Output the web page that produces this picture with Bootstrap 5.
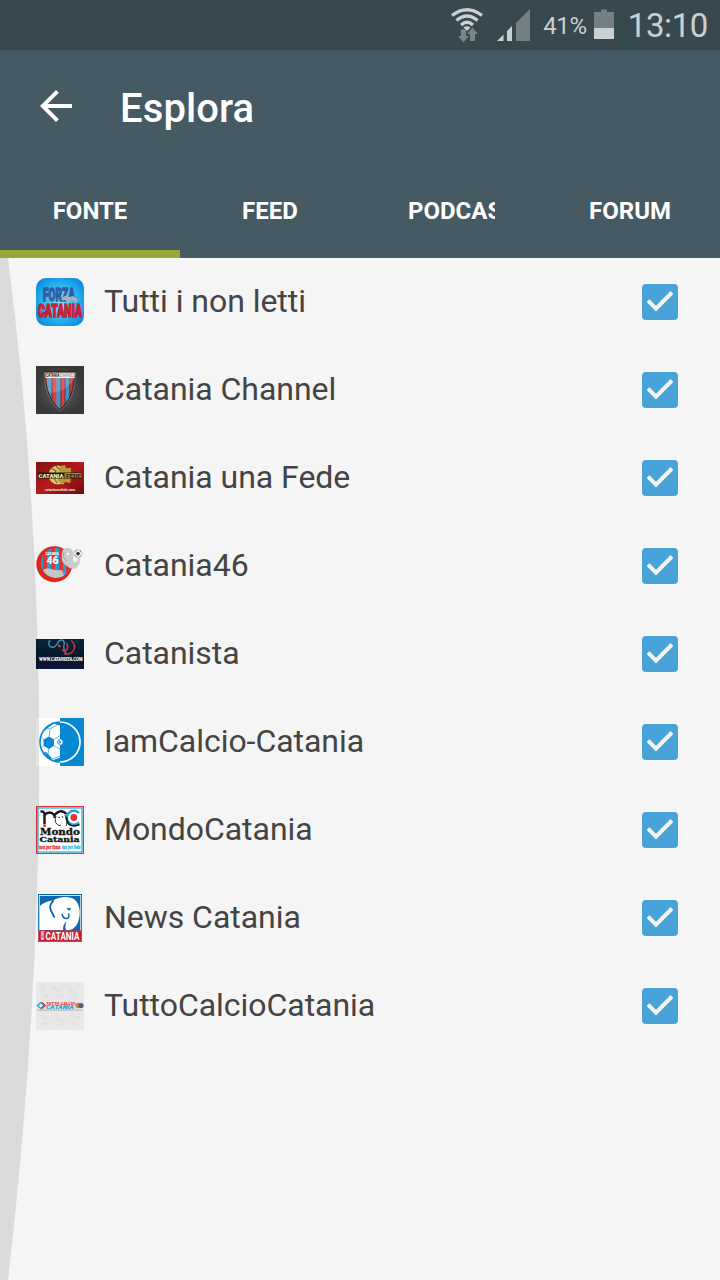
<!DOCTYPE html>
<html lang="it">
<head>
  <meta charset="utf-8">
  <meta name="viewport" content="width=device-width, initial-scale=1">
  <title>Esplora</title>
  <link href="https://cdn.jsdelivr.net/npm/bootstrap@5.3.0/dist/css/bootstrap.min.css" rel="stylesheet">
  <style>
    body {
      font-family: Roboto, "Noto Sans", sans-serif;
      background: #f5f5f5;
      color: #444;
      height: 1280px;
      overflow: hidden;
    }
    svg { display: block; flex-shrink: 0; }
    .status-bar { height: 50px; background: #38484f; color: #cbd0d2; }
    .battery-text { font-size: 24px; line-height: 50px; margin: 1px 7px 0 12px; letter-spacing: -.3px; }
    .clock { font-size: 33px; line-height: 50px; margin: 2px 12px 0 14px; letter-spacing: -.4px; }
    .app-header { background: #465a64; }
    .app-header .navbar { height: 112px; padding: 0 0 0 32px; }
    .app-title { font-size: 40px; font-weight: 500; line-height: 48px; letter-spacing: .1px; margin: 5px 0 0 40px; }
    .source-tabs { height: 96px; }
    .source-tabs .nav-link {
      height: 96px;
      padding: 8px 0 0;
      border-radius: 0;
      border-bottom: 8px solid transparent;
      color: #fff;
      font-size: 24px;
      font-weight: 700;
    }
    .source-tabs .nav-link.active { border-color: #97a936; }
    .tab-text { overflow: hidden; white-space: nowrap; line-height: 32px; margin-top: 1px; }
    .tab-cut { width: 87px; margin-left: 3px; }
    .source-list .list-group-item {
      height: 88px;
      padding: 0 36px;
      border: 0;
      background: transparent;
      color: #444;
      font-size: 32px;
    }
    .source-name { margin: -2px 0 0 20px; line-height: 48px; letter-spacing: -.04px; }
    .edge-glow { top: 258px; left: 0; pointer-events: none; z-index: 2; }
  </style>
</head>
<body>
  <div class="status-bar d-flex align-items-center justify-content-end">
    <!-- wifi -->
    <svg width="36" height="50" viewBox="0 0 36 50">
      <g fill="none" stroke="#cbd0d2" stroke-width="3.2">
        <path d="M3 15.500Q18 4 33 15.500"/>
        <path d="M7.500 20.500Q18 11.500 28.500 20.500"/>
        <path d="M12 25Q18 19.500 24 25"/>
      </g>
      <path d="M14.500 27.500Q18 24.800 21.500 27.500L18 31z" fill="#cbd0d2"/>
      <path d="M12 29.500h5V36h3l-5.500 6.500L9 36h3zM21 41v-7h-3l5.500-6.500L29 34h-3v7z" fill="#7b868a"/>
    </svg>
    <!-- signal -->
    <svg width="46" height="50" viewBox="0 0 46 50">
      <path d="M12 41h6.500v-6.500zM22 41h5V26l-5 5z" fill="#cbd0d2"/>
      <path d="M31 41h14V9L31 23z" fill="#758085"/>
    </svg>
    <span class="battery-text">41%</span>
    <svg width="20" height="50" viewBox="0 0 20 50">
      <path d="M0 12h7V9.500h6V12h7v17H0z" fill="#758085"/>
      <path d="M0 28h20v11H0z" fill="#cbd0d2"/>
    </svg>
    <span class="clock">13:10</span>
  </div>

  <header class="app-header">
    <nav class="navbar d-flex flex-nowrap justify-content-start text-white">
      <a href="#" aria-label="Indietro">
        <svg width="48" height="48" viewBox="0 0 24 24"><path d="M20 11H7.830l5.590-5.590L12 4l-8 8 8 8 1.410-1.410L7.830 13H20z" fill="#fff"/></svg>
      </a>
      <h1 class="app-title mb-0">Esplora</h1>
    </nav>
    <ul class="source-tabs nav nav-fill flex-nowrap">
      <li class="nav-item col-3"><a class="nav-link active d-flex align-items-center justify-content-center" href="#"><span class="tab-text">FONTE</span></a></li>
      <li class="nav-item col-3"><a class="nav-link d-flex align-items-center justify-content-center" href="#"><span class="tab-text">FEED</span></a></li>
      <li class="nav-item col-3"><a class="nav-link d-flex align-items-center justify-content-center" href="#"><span class="tab-text tab-cut text-start">PODCAST</span></a></li>
      <li class="nav-item col-3"><a class="nav-link d-flex align-items-center justify-content-center" href="#"><span class="tab-text">FORUM</span></a></li>
    </ul>
  </header>

  <main>
    <ul class="source-list list-group list-group-flush">
      <li class="list-group-item d-flex align-items-center">
        <svg width="48" height="48" viewBox="0 0 48 48">
          <defs>
            <radialGradient id="skyGlow" r=".65"><stop offset="0" stop-color="#7be4fa"/><stop offset=".55" stop-color="#2bb5ef"/><stop offset="1" stop-color="#0583dc"/></radialGradient>
            <linearGradient id="forzaFill" x2="0" y2="1"><stop offset="0" stop-color="#1d6fd0"/><stop offset=".5" stop-color="#345bb4"/><stop offset="1" stop-color="#9b4b91"/></linearGradient>
          </defs>
          <rect width="48" height="48" rx="10" fill="url(#skyGlow)"/>
          <g font-family="Roboto, sans-serif" font-weight="900">
            <text x="7" y="23" font-size="18" textLength="32" lengthAdjust="spacingAndGlyphs" fill="url(#forzaFill)" stroke="#315a9d" stroke-width="1.300">FORZA</text>
            <text x="2" y="38.500" font-size="18" textLength="44" lengthAdjust="spacingAndGlyphs" fill="#df2039" stroke="#c4213c" stroke-width="1.600">CATANIA</text>
          </g>
          <path d="M26 20q4-4 7-1l4-1 4 3v3h-3l-2-2-2 2h-3l-2-2-3 1z" fill="#a9b1c0"/>
        </svg>
        <span class="source-name">Tutti i non letti</span>
      </li>
      <li class="list-group-item d-flex align-items-center">
        <svg width="48" height="48" viewBox="0 0 48 48">
          <defs>
            <radialGradient id="darkPlate"><stop offset="0" stop-color="#656565"/><stop offset="1" stop-color="#383838"/></radialGradient>
            <clipPath id="shieldClip"><path d="M9 6h30q0 26-15 38Q9 32 9 6z"/></clipPath>
          </defs>
          <rect width="48" height="48" fill="url(#darkPlate)"/>
          <g clip-path="url(#shieldClip)">
            <rect width="48" height="48" fill="#e43c32"/>
            <path d="M13.500 10v35M22.500 10v35M31 10v35" stroke="#4b8fc4" stroke-width="4.500"/>
            <path d="M37.500 10v35" stroke="#b1342f" stroke-width="3"/>
            <path d="M16 10v35M25 10v35M29 10v35M34 10v35" stroke="#30303a" stroke-width=".8"/>
            <path d="M9 11h30Q31 27 12 27z" fill="#fff" opacity=".18"/>
          </g>
          <path d="M9 6h30q0 26-15 38Q9 32 9 6z" fill="none" stroke="#252525" stroke-width="1.500"/>
          <path d="M8.300 6.500h31.200q0 26.500-15.500 38.500Q8.300 32.500 8.300 6.500z" fill="none" stroke="#9a9a9a" stroke-width=".6"/>
          <rect x="9.500" y="7" width="29" height="5" fill="#f2f2ee"/>
          <text x="10" y="11.200" font-family="Roboto, sans-serif" font-size="4.500" textLength="28" lengthAdjust="spacingAndGlyphs" fill="#222"><tspan font-weight="700">CATANIA</tspan><tspan fill="#777">CHANNEL</tspan></text>
        </svg>
        <span class="source-name">Catania Channel</span>
      </li>
      <li class="list-group-item d-flex align-items-center">
        <svg width="48" height="48" viewBox="0 0 48 48">
          <defs><linearGradient id="redBand" x2="1" y2="1"><stop offset="0" stop-color="#801010"/><stop offset=".5" stop-color="#b51a1b"/><stop offset="1" stop-color="#6e0d10"/></linearGradient></defs>
          <rect y="8" width="48" height="32" fill="url(#redBand)"/>
          <circle cx="22" cy="21" r="9.500" fill="#dcc56c"/>
          <path d="M15 14l5 3-3 5 4 7M20 12l5 5" stroke="#7e6524" stroke-width="1.200" fill="none"/>
          <path d="M24 12l5-1 1 3h5v5l1 3-1 3-1 4-5-1-2 3-5-4z" fill="#b89537"/>
          <rect x="2" y="18.500" width="44" height="6" fill="#211808"/>
          <rect x="28.500" y="19" width="17" height="5" fill="#a08638"/>
          <g font-family="Roboto, sans-serif" font-weight="900">
            <text x="2.500" y="23.800" font-size="5.800" textLength="25" lengthAdjust="spacingAndGlyphs" fill="#fff3ba">CATANIA</text>
            <text x="30" y="23.800" font-size="5.800" textLength="15" lengthAdjust="spacingAndGlyphs" fill="#3a2c0c">FEDE</text>
            <text x="9" y="36.500" font-size="4" textLength="30" lengthAdjust="spacingAndGlyphs" fill="#ffd0cb">cataniaunafede.com</text>
          </g>
        </svg>
        <span class="source-name">Catania una Fede</span>
      </li>
      <li class="list-group-item d-flex align-items-center">
        <svg width="48" height="48" viewBox="0 0 48 48">
          <defs><clipPath id="discClip"><circle cx="20" cy="21" r="15"/></clipPath></defs>
          <circle cx="18.300" cy="22.200" r="18" fill="#df261f"/>
          <g clip-path="url(#discClip)">
            <rect width="48" height="48" fill="#299ed5"/>
            <path d="M9 5v34M17 5v34M25 5v34M32 5v34" stroke="#e53334" stroke-width="4"/>
            <path d="M7 28q4-3 8-1 6 2 11 1l3 9H8z" fill="#c3c5c7"/>
          </g>
          <path d="M26.500 9q2-4 6-3 5 1 5 7-1 6 1 7.500 3 0 3.500-4.500l2 .5q0 7-4 9.500-5 2-9-2-4-2-5-6-1-5 .5-9z" fill="#c8cacc"/>
          <path d="M28 10q-2 7 3 9" stroke="#a6a9ab" fill="none"/>
          <circle cx="32" cy="12" r="1.200" fill="#fff"/>
          <circle cx="42" cy="11.700" r="4" fill="#eee" stroke="#aaa" stroke-width=".6"/>
          <path d="M41 10.500h2l.7 1.500-1.700 1.200-1.700-1.200zM39.300 9l1-.8M44 8.500l1 .8M44.500 14l-.8.800M39.300 13.500l.8 1" fill="#333" stroke="#333" stroke-width=".8"/>
          <g font-family="Roboto, sans-serif" font-weight="900" fill="#fff">
            <text x="9.500" y="12.500" font-size="3.500" textLength="13" lengthAdjust="spacingAndGlyphs">CATANIA</text>
            <text x="10.500" y="22" font-size="11.500" textLength="12" lengthAdjust="spacingAndGlyphs">46</text>
          </g>
        </svg>
        <span class="source-name">Catania46</span>
      </li>
      <li class="list-group-item d-flex align-items-center">
        <svg width="48" height="48" viewBox="0 0 48 48">
          <defs><linearGradient id="nightFill" x2="0" y2="1"><stop offset="0" stop-color="#08253b"/><stop offset=".7" stop-color="#041427"/><stop offset="1" stop-color="#101843"/></linearGradient></defs>
          <rect y="9" width="48" height="30" fill="url(#nightFill)"/>
          <path d="M14 10q-3 5 1 7 4 1 6-3 2-4 5-4 3 1 2 5-1 5 2 8" fill="none" stroke="#4287b1" stroke-width="1.500"/>
          <path d="M30 13q3 3 1 6-2 3-5 1M35 10.500q5 4 3 9-3 6-10 4" fill="none" stroke="#c8373d" stroke-width="1.600"/>
          <path d="M22 14.500l3 1-1 2-2-1z" fill="#e14646"/>
          <text x="3" y="30.500" font-family="Liberation Serif, serif" font-weight="700" font-size="5.200" textLength="43.500" lengthAdjust="spacingAndGlyphs" fill="#fff" stroke="#fff" stroke-width=".2">WWW.CATANISTA.COM</text>
        </svg>
        <span class="source-name">Catanista</span>
      </li>
      <li class="list-group-item d-flex align-items-center">
        <svg width="48" height="48" viewBox="0 0 48 48">
          <defs><clipPath id="ballClip"><path d="M24 4a20 20 0 0 0 0 40z"/></clipPath></defs>
          <path d="M0 0h24v48H0z" fill="#fff"/>
          <path d="M24 0h24v48H24z" fill="#0788d2"/>
          <g clip-path="url(#ballClip)">
            <path d="M7.500 21.500l5.500-3 5 3v6l-5 3.500-5.500-3zM8 13l3-8 9-1-7 5zM16 3h8v4.500l-4-1zM5 33l6 1.500 5 6-3 2zM17 42l7-2.500V45zM2 17h3l-1 6-2 2z" fill="#0788d2"/>
            <path d="M13 18.500l1-7M18 21.500l6-4M18 27.500l6 4M13 31l-1 5M7.500 28L4 31M7.500 21.500L5 18M14 11l7-4M12 36l-5-2M16 41l8-3M14 11l-4-1" fill="none" stroke="#5baedf" stroke-width=".9"/>
          </g>
          <path d="M24 4a20 20 0 0 0 0 40" fill="none" stroke="#0788d2" stroke-width="1.600"/>
          <path d="M24 4a20 20 0 0 1 0 40" fill="none" stroke="#fff" stroke-width="1.700"/>
          <path d="M24 21.700a2.300 2.300 0 0 0 0 4.600" fill="#fff" stroke="#0788d2"/>
          <path d="M24 21.300a2.700 2.700 0 0 1 0 5.400z" fill="#fff"/>
          <circle cx="24" cy="24" r="1" fill="#0788d2"/>
        </svg>
        <span class="source-name">IamCalcio-Catania</span>
      </li>
      <li class="list-group-item d-flex align-items-center">
        <svg width="48" height="48" viewBox="0 0 48 48">
          <rect x=".6" y=".6" width="46.800" height="46.800" fill="#fff" stroke="#e43439" stroke-width="1.200"/>
          <rect x="2" y="2" width="44" height="44" fill="none" stroke="#37b7df" stroke-width="1.300"/>
          <path d="M4.500 5.500q4-.5 4 3V18M8.500 9q5-5 10 0 6-7 12-1" fill="none" stroke="#171717" stroke-width="2.400"/>
          <path d="M18.500 8v4" stroke="#171717" stroke-width="2.200"/>
          <path d="M20 10q-2 6 1 8 2 3 4 1M29 9q3 8 1 11" fill="none" stroke="#333" stroke-width="1"/>
          <circle cx="23" cy="11.500" r=".8" fill="#222"/>
          <circle cx="26.500" cy="11" r=".8" fill="#222"/>
          <path d="M43 7a7 7 0 1 0 0 9.500" fill="none" stroke="#25a7d7" stroke-width="2.500"/>
          <path d="M30.500 11q0 7 5 8.500 4 1 8-1" fill="none" stroke="#171717" stroke-width="1.800"/>
          <circle cx="37.800" cy="11.500" r="3.400" fill="#e43439"/>
          <circle cx="8.500" cy="19.500" r="1.500" fill="#e43439"/>
          <g font-family="DejaVu Serif, serif" font-weight="700" fill="#111" stroke="#111" stroke-width=".3">
            <text x="4" y="28.500" font-size="9" textLength="40" lengthAdjust="spacingAndGlyphs">Mondo</text>
            <text x="3.500" y="35.500" font-size="8" textLength="40" lengthAdjust="spacingAndGlyphs">Catania</text>
          </g>
          <g font-family="Liberation Serif, serif" font-weight="700" font-size="7" stroke-width=".3">
            <text x="3" y="43" textLength="21.500" lengthAdjust="spacingAndGlyphs" fill="#e43439" stroke="#e43439">non per fama</text>
            <text x="26" y="43" textLength="18.500" lengthAdjust="spacingAndGlyphs" fill="#37b7df" stroke="#37b7df">ma per fede</text>
          </g>
        </svg>
        <span class="source-name">MondoCatania</span>
      </li>
      <li class="list-group-item d-flex align-items-center">
        <svg width="48" height="48" viewBox="0 0 48 48">
          <rect x="2" width="44" height="48" fill="#086aac"/>
          <rect x="3.300" y="1.500" width="41.400" height="45" fill="#086aac" stroke="#fff" stroke-width=".8"/>
          <!-- elephant: body, head and curled trunk -->
          <path d="M4 12Q9 7 17 6.500 22 3 30 3q9 0 12 7 3 7 1 15-2 9-9 11H4z" fill="#fff"/>
          <path d="M17.500 6.500q-5 5-2.500 10l3.500 7" fill="none" stroke="#086aac" stroke-width="1.800"/>
          <path d="M26 20q1 5 5 4.500 3-1 1.500-5" fill="none" stroke="#086aac" stroke-width="1.500"/>
          <path d="M31 13.500q2 1.500 4 0l-1 3q-3 0-3-3z" fill="#086aac"/>
          <path d="M27 36q0-6 3.500-9-2 5-.5 9zM44 24q-1 7-6 12h6z" fill="#086aac"/>
          <path d="M2 36.500h44V48H2z" fill="#c61f36"/>
          <path d="M2.500 37h43v10.500h-43z" fill="none" stroke="#b34b61" stroke-width="1"/>
          <g font-family="Roboto, sans-serif" fill="#fff" font-weight="700">
            <text x="9.500" y="46" font-size="11.500" textLength="34" lengthAdjust="spacingAndGlyphs">CATANIA</text>
            <text transform="translate(7.500 46) rotate(-90)" font-size="4" textLength="9" lengthAdjust="spacingAndGlyphs">NEWS</text>
          </g>
        </svg>
        <span class="source-name">News Catania</span>
      </li>
      <li class="list-group-item d-flex align-items-center">
        <svg width="48" height="48" viewBox="0 0 48 48">
          <rect width="48" height="48" fill="#e8e8e8"/>
          <path d="M3 5q3-3 5 0t-3 4M15 8q4-4 6 0t5-3M31 4q4 1 3 4t5 1M43 11q-3 2-5 0M7 14q4-2 5 2M21 15q3-4 6 0M34 16q4-3 6 1M3 34q4-2 5 2t4-2M19 33q4 1 3 4t5 1M33 35q3-4 6 0t5-1M6 43q4-4 6 0M20 44q3-3 6 0M35 43q3-3 6 1" fill="none" stroke="#e0e0e0" stroke-width="1.500"/>
          <path d="M5 20.500L1.500 23.500 5 26.500l3-3z" fill="none" stroke="#2d9fd0" stroke-width="1.500"/>
          <path d="M6 20.500l3.300 3-3.300 3" fill="none" stroke="#dd3944" stroke-width="1.500"/>
          <g font-family="Roboto, sans-serif" font-weight="900" font-style="italic">
            <text x="10" y="22.500" font-size="3.600" textLength="29" lengthAdjust="spacingAndGlyphs" fill="#d9323e">TUTTO CALCIO</text>
            <text x="10" y="26.700" font-size="4.900" textLength="28" lengthAdjust="spacingAndGlyphs" fill="#209bd0">CATANIA</text>
          </g>
          <path d="M1 28h28" stroke="#888" stroke-width=".8" stroke-dasharray="2 .6"/>
          <path d="M29 28h8" stroke="#e3767c" stroke-width=".8"/>
          <path d="M37 28h10" stroke="#80bcd6" stroke-width=".8"/>
          <circle cx="42" cy="23.500" r="2.800" fill="#c58b43"/>
          <circle cx="45" cy="23.500" r="2.600" fill="#685579"/>
        </svg>
        <span class="source-name">TuttoCalcioCatania</span>
      </li>
    </ul>
  </main>

  <svg class="edge-glow position-absolute" width="40" height="1022" viewBox="0 0 40 1022">
    <path d="M0 0H8Q70.500 484 8 1022H0z" fill="#000" opacity=".105"/>
  </svg>

  <script src="https://cdn.jsdelivr.net/npm/bootstrap@5.3.0/dist/js/bootstrap.bundle.min.js"></script>
  <script>
    // every source starts out selected
    document.querySelectorAll(".source-list .list-group-item").forEach(item => {
      item.insertAdjacentHTML("beforeend", `
        <svg class="ms-auto" width="48" height="48" viewBox="0 0 48 48" role="checkbox" aria-checked="true">
          <rect x="6" y="6" width="36" height="36" rx="4" fill="#48a4d8"/>
          <path d="M12 22.700l8 8L36 14.500" fill="none" stroke="#f5f5f5" stroke-width="4"/>
        </svg>`);
    });
  </script>
</body>
</html>
